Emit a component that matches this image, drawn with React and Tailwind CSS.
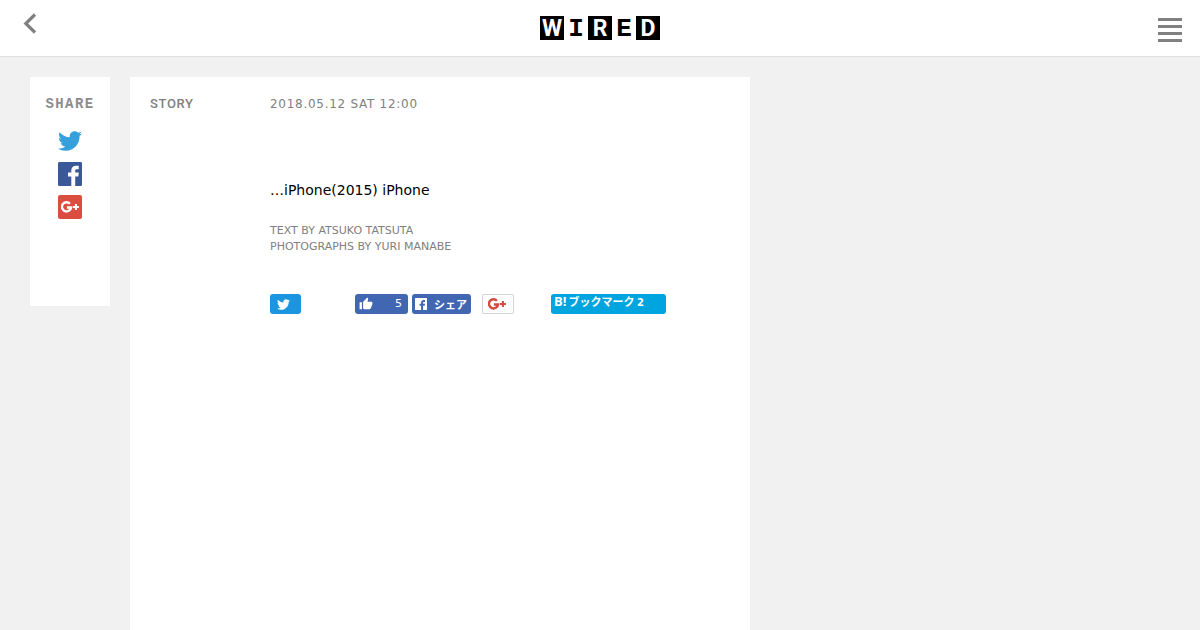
import { FaTwitter } from "react-icons/fa";
import { MdThumbUp } from "react-icons/md";

const FacebookIcon = ({ className }) => (
  <svg viewBox="0 0 24 24" className={className} aria-hidden="true">
    <rect width="24" height="24" rx="1.3" fill="currentColor" />
    <path
      d="M13.300 24v-9.500H10v-3.900h3.300V8.400C13.300 5.300 15.200 3.700 18.200 3.700c1.200 0 2.100.1 2.500.15v3.500h-1.800c-1.400 0-1.700.7-1.700 1.700v1.550h3.600l-.5 3.900h-3.100V24z"
      fill="#fff"
    />
  </svg>
);

const FacebookKnockout = ({ className }) => (
  <svg viewBox="0 0 12 12" className={className} aria-hidden="true">
    <rect width="12" height="12" rx="0.6" fill="#fff" />
    <path
      d="M6.100 12V7.700H4.600V5.800h1.500V4.700c0-1.800 1-2.700 2.600-2.700.6 0 1 0 1.300.1v1.800h-.9c-.8 0-1 .4-1 .9v1h1.900l-.3 1.900H8.100V12z"
      fill="#4267b2"
    />
  </svg>
);

const GooglePlusIcon = ({ className }) => (
  <svg viewBox="0 0 18 12" className={className} aria-hidden="true">
    <path
      d="M8.900 2.700A4.600 4.600 0 1 0 10.100 6.500H5.900"
      fill="none"
      stroke="currentColor"
      strokeWidth="2.400"
    />
    <path d="M11.900 6h6M14.900 3v6" fill="none" stroke="currentColor" strokeWidth="2" />
  </svg>
);

const logoTiles = [
  { letter: "W", className: "bg-black text-white font-['Roboto',sans-serif] text-[23px]" },
  { letter: "I", className: "text-black font-['Liberation_Mono',monospace] text-[26px]" },
  { letter: "R", className: "bg-black text-white font-['Roboto',sans-serif] text-[23px]" },
  { letter: "E", className: "text-black font-['Liberation_Mono',monospace] text-[26px]" },
  { letter: "D", className: "bg-black text-white font-['Roboto',sans-serif] text-[23px]" },
];

const Header = () => (
  <header className="flex h-[57px] items-start justify-between border-b border-[#e0e0e0] bg-white">
    <div className="flex flex-1 pt-3 pl-[18px]">
      <button type="button" aria-label="Back" className="h-6 w-6 text-[#808080]">
        <svg viewBox="0 0 24 24" className="h-6 w-6" aria-hidden="true">
          <path d="M17 2.500 7.800 11.500 17 20.500" fill="none" stroke="currentColor" strokeWidth="3.200" />
        </svg>
      </button>
    </div>
    <a href="#" aria-label="WIRED" className="flex pt-4">
      {logoTiles.map((tile) => (
        <span
          key={tile.letter}
          className={`flex h-6 w-6 items-center justify-center pt-0.5 leading-6 font-bold ${tile.className}`}
        >
          {tile.letter}
        </span>
      ))}
    </a>
    <div className="flex flex-1 justify-end pt-[18px] pr-[18px]">
      <button type="button" aria-label="Menu" className="flex w-6 flex-col gap-1">
        <span className="h-[3px] w-full bg-[#808080]" />
        <span className="h-[3px] w-full bg-[#808080]" />
        <span className="h-[3px] w-full bg-[#808080]" />
        <span className="h-[3px] w-full bg-[#808080]" />
      </button>
    </div>
  </header>
);

const ShareBox = () => (
  <aside className="flex min-h-[229px] w-20 shrink-0 flex-col items-center bg-white pt-5">
    <h2 className="font-['Liberation_Mono',monospace] text-sm leading-[14px] font-bold tracking-widest text-[#8c8c8c]">
      SHARE
    </h2>
    <ul className="mt-[18px] flex flex-col gap-[9px]">
      <li>
        <a href="#" aria-label="Twitter" className="block">
          <FaTwitter className="h-6 w-6 text-[#35a0dc]" />
        </a>
      </li>
      <li>
        <a href="#" aria-label="Facebook" className="block">
          <FacebookIcon className="h-6 w-6 text-[#3b5998]" />
        </a>
      </li>
      <li>
        <a
          href="#"
          aria-label="Google Plus"
          className="flex h-6 w-6 items-center justify-center rounded-xs bg-[#db4e3f]"
        >
          <GooglePlusIcon className="h-3 w-[18px] text-white" />
        </a>
      </li>
    </ul>
  </aside>
);

const ShareButtons = () => (
  <div className="mt-10 flex h-5 text-white">
    <div className="w-[85px]">
      <button
        type="button"
        aria-label="Tweet"
        className="flex h-5 w-[31px] items-center rounded-[3px] bg-[#1b95e0] pl-[7px]"
      >
        <FaTwitter className="h-[13px] w-[13px]" />
      </button>
    </div>
    <button
      type="button"
      aria-label="Like"
      className="mr-1 flex h-5 w-[53px] items-center justify-between rounded-[3px] bg-[#4267b2] pr-1.5 pl-1"
    >
      <MdThumbUp className="h-[14px] w-[14px]" />
      <span className="text-[11px] leading-5">5</span>
    </button>
    <button
      type="button"
      className="mr-[11px] flex h-5 w-[59px] items-center justify-between rounded-[3px] bg-[#4267b2] pr-1 pl-[3px]"
    >
      <FacebookKnockout className="h-3 w-3" />
      <span className="font-['Noto_Sans_CJK_JP',sans-serif] text-[11px] leading-5 font-bold">
        シェア
      </span>
    </button>
    <button
      type="button"
      aria-label="Google Plus"
      className="mr-[37px] flex h-5 w-8 items-center justify-center rounded-xs border border-[#d0d4de] bg-white pr-[2px]"
    >
      <GooglePlusIcon className="h-3 w-[18px] text-[#d14a3c]" />
    </button>
    <button
      type="button"
      className="flex h-5 w-[115px] items-start gap-[2px] rounded-[3px] bg-[#00a4de] pl-[3px] font-['Noto_Sans_CJK_JP',sans-serif] leading-[14px] font-bold"
    >
      <span className="font-['Open_Sans',sans-serif] text-[13px]">B!</span>
      <span className="text-[11px]">
        ブックマーク <span className="font-['DejaVu_Sans',sans-serif] text-[10px]">2</span>
      </span>
    </button>
  </div>
);

const Article = () => (
  <main className="max-w-[620px] min-w-0 flex-1 bg-white p-5">
    <div className="flex text-xs leading-[14px] text-[#808080]">
      <p className="w-[120px] shrink-0 font-['Roboto',sans-serif] text-[13px] font-medium tracking-wider">
        STORY
      </p>
      <time dateTime="2018-05-12T12:00" className="tracking-[0.06em]">
        2018.05.12 SAT 12:00
      </time>
    </div>
    <div className="pl-[120px]">
      <p className="mt-[69px] text-sm leading-5 text-black">…iPhone(2015) iPhone</p>
      <p className="mt-[23px] -mb-px text-[11px] leading-4 text-[#808080]">
        TEXT BY ATSUKO TATSUTA
        <br />
        PHOTOGRAPHS BY YURI MANABE
      </p>
      <ShareButtons />
    </div>
  </main>
);

const App = () => (
  <div className="flex min-h-screen flex-col bg-[#f1f1f1] font-['DejaVu_Sans','Noto_Sans_CJK_JP',sans-serif]">
    <Header />
    <div className="flex flex-1 items-start gap-5 px-[30px] pt-5">
      <ShareBox />
      <div className="flex flex-1 self-stretch">
        <Article />
      </div>
    </div>
  </div>
);

export default App;
